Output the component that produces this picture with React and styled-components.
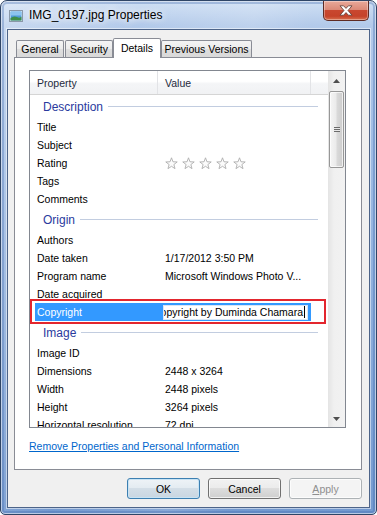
import React from "react";
import styled, { createGlobalStyle } from "styled-components";

const sections = [
  {
    title: "Description",
    rows: [
      { name: "Title" },
      { name: "Subject" },
      { name: "Rating", stars: true },
      { name: "Tags" },
      { name: "Comments" },
    ],
  },
  {
    title: "Origin",
    rows: [
      { name: "Authors" },
      { name: "Date taken", value: "1/17/2012 3:50 PM" },
      { name: "Program name", value: "Microsoft Windows Photo V..." },
      { name: "Date acquired" },
      { name: "Copyright", edit: "Copyright by Duminda Chamara", selected: true },
    ],
  },
  {
    title: "Image",
    rows: [
      { name: "Image ID" },
      { name: "Dimensions", value: "2448 x 3264" },
      { name: "Width", value: "2448 pixels" },
      { name: "Height", value: "3264 pixels" },
      { name: "Horizontal resolution", value: "72 dpi" },
    ],
  },
];

const tabs = [
  { label: "General", w: 48 },
  { label: "Security", w: 48, gap: 1 },
  { label: "Details", w: 48, active: true },
  { label: "Previous Versions", w: 91 },
];

const Star = () => (
  <svg width="13" height="13" viewBox="0 0 13 13">
    <polygon
      points="6.5,0.8 7.97,4.78 12.21,4.95 8.88,7.57 10.03,11.65 6.5,9.3 2.97,11.65 4.12,7.57 0.79,4.95 5.03,4.78"
      fill="#fbfbfb"
      stroke="#aeaeae"
      strokeWidth="0.9"
      strokeLinejoin="round"
    />
  </svg>
);

const Arrow = ({ down }) => (
  <svg width="7" height="4" viewBox="0 0 7 4">
    <polygon points={down ? "0,0 7,0 3.5,4" : "0,4 7,4 3.5,0"} fill="#4f4f4f" />
  </svg>
);

const App = () => {
  return (
    <>
      <GlobalStyle />
      <Window>
        <TitleBar>
          <svg width="14" height="12" viewBox="0 0 14 12">
            <rect x="0.5" y="0.5" width="13" height="11" fill="#fff" stroke="#8a98a8" />
            <rect x="1.5" y="1.5" width="11" height="9" fill="#4f9ad8" />
            <rect x="1.5" y="1.5" width="11" height="4" fill="#8cc4ee" />
            <path d="M1.5 8 Q5 5.5 8 7 T12.5 6.5 V10.5 H1.5 Z" fill="#3f8f4a" />
          </svg>
          <Title>IMG_0197.jpg Properties</Title>
          <CloseButton>
            <svg width="14" height="11" viewBox="0 0 14 11">
              <polygon
                points="1,0.8 4.6,0.8 7,3.4 9.4,0.8 13,0.8 9,5.5 13,10.2 9.4,10.2 7,7.6 4.6,10.2 1,10.2 5,5.5"
                fill="#fff"
                stroke="#5b3a34"
                strokeWidth="0.8"
                strokeLinejoin="round"
              />
            </svg>
          </CloseButton>
        </TitleBar>
        <Client>
          <TabStrip>
            {tabs.map(t => (
              <Tab key={t.label} $w={t.w} $gap={t.gap} $active={t.active}>
                {t.label}
              </Tab>
            ))}
          </TabStrip>
          <Panel>
            <ListBox>
              <ListMain>
                <Header>
                  <HeaderCell $w={128}>Property</HeaderCell>
                  <HeaderCell $w={153}>Value</HeaderCell>
                  <HeaderCell />
                </Header>
                <Rows>
                  {sections.map(sec => (
                    <React.Fragment key={sec.title}>
                      <GroupRow>
                        <span>{sec.title}</span>
                        <GroupLine />
                      </GroupRow>
                      {sec.rows.map(r => (
                        <Row key={r.name} $selected={r.selected}>
                          <Cell>{r.name}</Cell>
                          <Cell>
                            {r.stars && (
                              <Stars>
                                <Star />
                                <Star />
                                <Star />
                                <Star />
                                <Star />
                              </Stars>
                            )}
                            {r.value}
                            {r.edit && (
                              <EditBox>
                                <span>{r.edit}</span>
                                <Caret />
                              </EditBox>
                            )}
                          </Cell>
                        </Row>
                      ))}
                    </React.Fragment>
                  ))}
                </Rows>
              </ListMain>
              <ScrollBar>
                <ScrollButton $h={20}>
                  <Arrow />
                </ScrollButton>
                <Thumb>
                  <Grip />
                </Thumb>
                <ScrollButton $h={17} $bottom>
                  <Arrow down />
                </ScrollButton>
              </ScrollBar>
            </ListBox>
            <RemoveLink href="#">Remove Properties and Personal Information</RemoveLink>
          </Panel>
          <ButtonRow>
            <Button $default>OK</Button>
            <Button>Cancel</Button>
            <Button disabled>
              <u>A</u>pply
            </Button>
          </ButtonRow>
        </Client>
      </Window>
    </>
  );
};

export default App;

const GlobalStyle = createGlobalStyle`
  body {
    margin: 0;
    background: #ffffff;
    font-family: "Liberation Sans", Arial, sans-serif;
    font-size: 10.5px;
    color: #000;
  }
`;

const Window = styled.div`
  width: 377px;
  height: 515px;
  box-sizing: border-box;
  border: 1px solid #2f4566;
  border-radius: 7px 7px 5px 5px;
  padding: 0 6px 6px;
  display: flex;
  flex-direction: column;
  overflow: hidden;
  background:
    linear-gradient(100deg, rgba(255,255,255,0.3) 0%, rgba(255,255,255,0) 30%, rgba(255,255,255,0.15) 55%, rgba(255,255,255,0) 68%),
    linear-gradient(to bottom, #d0e0f4 0, #b3caea 24px, #9fbce4 140px, #7399cf 100%);
  box-shadow: inset 0 0 0 1px rgba(255, 255, 255, 0.55), inset 0 0 0 3px rgba(70, 110, 175, 0.35);
`;

const TitleBar = styled.div`
  height: 28px;
  display: flex;
  align-items: center;
  padding-left: 2px;

  & > svg {
    margin-top: 1px;
  }
`;

const Title = styled.div`
  margin-left: 6px;
  font-size: 12px;
  color: #000;
  text-shadow: 0 0 6px rgba(255, 255, 255, 0.95), 0 0 10px rgba(255, 255, 255, 0.8);
`;

const CloseButton = styled.div`
  align-self: flex-start;
  margin-left: auto;
  margin-right: 1px;
  width: 46px;
  height: 20px;
  box-sizing: border-box;
  border: 1px solid #5e2b24;
  border-top: none;
  border-radius: 0 0 5px 5px;
  display: flex;
  align-items: center;
  justify-content: center;
  background: linear-gradient(to bottom, #e9a99a 0%, #dc8a78 45%, #c9472f 50%, #c54229 80%, #d8704f 100%);
  box-shadow: inset 0 0 0 1px rgba(255, 255, 255, 0.35);
`;

const Client = styled.div`
  flex: 1;
  background: #f0f0f0;
  border: 1px solid #4d6489;
  box-shadow: 0 0 0 1px rgba(255, 255, 255, 0.5);
  padding: 8px 7px 8px 6px;
  display: flex;
  flex-direction: column;
`;

const TabStrip = styled.div`
  display: flex;
  align-items: flex-end;
  height: 20px;
  margin: 0 0 -1px 2px;
  position: relative;
  z-index: 1;
`;

const Tab = styled.div`
  width: ${p => p.$w}px;
  margin-left: ${p => p.$gap || 0}px;
  height: ${p => (p.$active ? 20 : 17)}px;
  margin-bottom: ${p => (p.$active ? 0 : 1)}px;
  padding-bottom: ${p => (p.$active ? 2 : 0)}px;
  box-sizing: border-box;
  border: 1px solid #898c95;
  border-bottom: none;
  border-radius: 2px 2px 0 0;
  display: flex;
  align-items: center;
  justify-content: center;
  white-space: nowrap;
  background: ${p =>
    p.$active
      ? "#ffffff"
      : "linear-gradient(to bottom, #f4f4f4 0%, #ebebeb 50%, #dedede 51%, #d9d9d9 100%)"};
`;

const Panel = styled.div`
  height: 413px;
  box-sizing: border-box;
  border: 1px solid #898c95;
  background: #ffffff;
  padding: 12px 15px 0 14px;
  display: flex;
  flex-direction: column;
`;

const ListBox = styled.div`
  width: 317px;
  height: 358px;
  box-sizing: border-box;
  border: 1px solid #828790;
  display: flex;
  overflow: hidden;
`;

const ListMain = styled.div`
  flex: 1;
  min-width: 0;
  display: flex;
  flex-direction: column;
  overflow: hidden;
`;

const Header = styled.div`
  display: flex;
  height: 24px;
  flex-shrink: 0;
  box-sizing: border-box;
  border-bottom: 1px solid #d5d5d5;
  background: linear-gradient(to bottom, #ffffff 0%, #ffffff 45%, #f4f5f7 55%, #f1f2f4 100%);
`;

const HeaderCell = styled.div`
  width: ${p => (p.$w ? `${p.$w}px` : "auto")};
  flex: ${p => (p.$w ? "none" : 1)};
  box-sizing: border-box;
  padding-left: 7px;
  border-right: ${p => (p.$w ? "1px solid #e2e3e6" : "none")};
  display: flex;
  align-items: center;
  color: #1e2a3c;
`;

const Rows = styled.div`
  flex: 1;
  overflow: hidden;
`;

const GroupRow = styled.div`
  height: 23px;
  margin: 0 10px 0 5px;
  padding-left: 8px;
  display: flex;
  align-items: center;
  font-size: 12px;
  color: #2a3a9e;
`;

const GroupLine = styled.div`
  flex: 1;
  height: 1px;
  margin-left: 5px;
  background: #c2cde0;
`;

const Row = styled.div`
  position: relative;
  display: grid;
  grid-template-columns: 128px 1fr;
  height: 18px;
  margin: 0 17px 0 5px;
  background: ${p => (p.$selected ? "#3399ff" : "transparent")};
  color: ${p => (p.$selected ? "#ffffff" : "#000000")};

  &::after {
    content: "";
    display: ${p => (p.$selected ? "block" : "none")};
    position: absolute;
    left: -5px;
    right: -15px;
    top: -4px;
    bottom: -3px;
    border: 2px solid #e3262e;
    pointer-events: none;
  }
`;

const Cell = styled.div`
  padding-left: 2px;
  display: flex;
  align-items: center;
  white-space: nowrap;
  overflow: hidden;
`;

const Stars = styled.div`
  display: flex;
  gap: 4px;
  padding-top: 1px;
`;

const EditBox = styled.div`
  margin-left: -2px;
  width: 145px;
  height: 15px;
  box-sizing: border-box;
  background: #ffffff;
  border: 1px solid #d8e6f5;
  color: #000;
  display: flex;
  align-items: center;
  justify-content: flex-end;
  overflow: hidden;
  padding-right: 2px;

  span {
    white-space: nowrap;
  }
`;

const Caret = styled.i`
  flex-shrink: 0;
  width: 1px;
  height: 12px;
  margin-left: 1px;
  background: #000;
`;

const ScrollBar = styled.div`
  width: 17px;
  flex-shrink: 0;
  display: flex;
  flex-direction: column;
  background: linear-gradient(to right, #e4e4e4 0%, #f0f0f0 35%, #f2f2f2 100%);
`;

const ScrollButton = styled.div`
  height: ${p => p.$h}px;
  margin-top: ${p => (p.$bottom ? "auto" : "0")};
  display: flex;
  align-items: center;
  justify-content: center;
`;

const Thumb = styled.div`
  height: 77px;
  margin: 0 1px;
  box-sizing: border-box;
  border: 1px solid #979797;
  border-radius: 2px;
  display: flex;
  align-items: center;
  justify-content: center;
  background: linear-gradient(to right, #f5f5f5 0%, #ebebeb 45%, #d9d9d9 55%, #cdcdcd 100%);
  box-shadow: inset 0 0 0 1px rgba(255, 255, 255, 0.7);
`;

const Grip = styled.div`
  width: 6px;
  height: 5px;
  background: repeating-linear-gradient(to bottom, #6b6b6b 0, #6b6b6b 1px, #e8e8e8 1px, #e8e8e8 2px);
`;

const RemoveLink = styled.a`
  align-self: flex-start;
  margin-top: 11px;
  line-height: 14px;
  color: #0066cc;
  text-decoration: underline;
`;

const ButtonRow = styled.div`
  display: flex;
  justify-content: flex-end;
  gap: 8px;
  margin-top: 8px;
`;

const Button = styled.button`
  width: 73px;
  height: 21px;
  box-sizing: border-box;
  padding: 0;
  font-family: inherit;
  font-size: 10.5px;
  color: ${p => (p.disabled ? "#8f8f8f" : "#000")};
  border: 1px solid ${p => (p.$default ? "#3c7fb1" : p.disabled ? "#adb2b5" : "#707070")};
  border-radius: 3px;
  background: ${p =>
    p.disabled
      ? "#f4f4f4"
      : p.$default
      ? "linear-gradient(to bottom, #eef3f7 0%, #e3ebf1 49%, #d3dee7 50%, #c9d6e1 100%)"
      : "linear-gradient(to bottom, #f2f2f2 0%, #ebebeb 49%, #dddddd 50%, #cfcfcf 100%)"};
  box-shadow: inset 0 0 0 1px ${p => (p.$default ? "#c8e3f4" : "rgba(255,255,255,0.7)")};

  u {
    text-decoration: underline;
  }
`;
